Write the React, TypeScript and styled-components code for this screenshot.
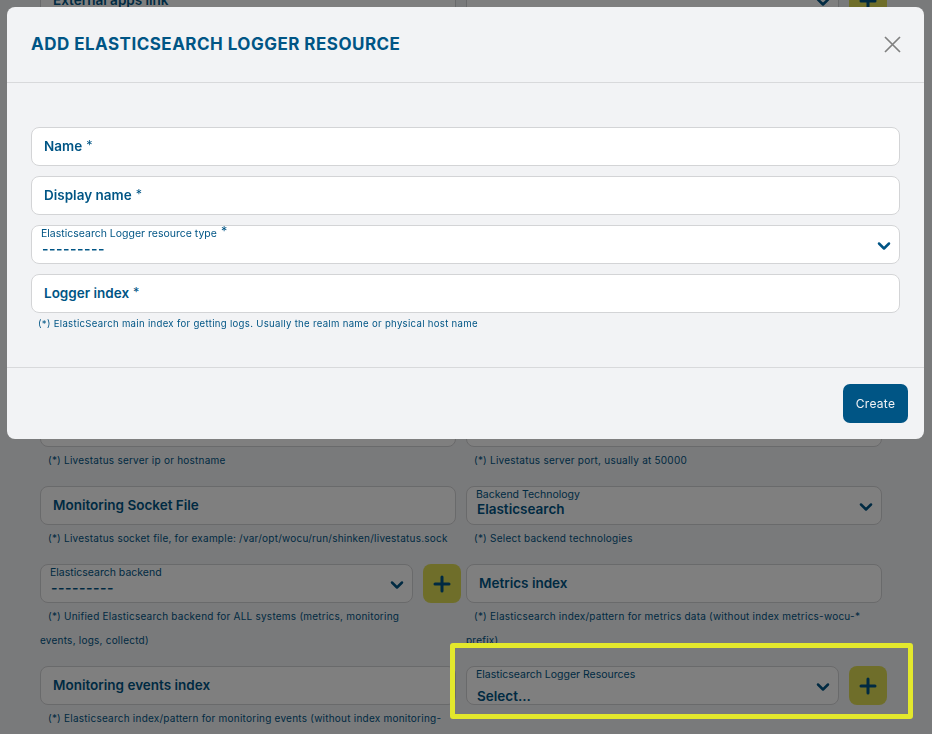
import * as React from "react";
import styled, { createGlobalStyle } from "styled-components";
import { ChevronDown, Plus } from "lucide-react";

const GlobalStyle = createGlobalStyle`
  html, body {
    margin: 0;
    height: 100%;
    overflow: hidden;
    background: #f3f4f6;
    font-family: "Inter", "Liberation Sans", sans-serif;
    color: #005585;
  }
`;

const Page = styled.div`
  height: 734px;
  overflow: hidden;
`;

const Form = styled.div`
  margin-top: -19px;
  padding-left: 40px;
`;

const Row = styled.div<{ $gap?: number }>`
  display: grid;
  grid-template-columns: 416px 416px;
  column-gap: 10px;
  margin-bottom: ${({ $gap }) => $gap ?? 14}px;
`;

const FieldRow = styled.div`
  display: flex;
  gap: 10px;
`;

const Field = styled.div<{ $narrow?: boolean }>`
  position: relative;
  box-sizing: border-box;
  width: ${({ $narrow }) => ($narrow ? "373px" : "100%")};
  height: 39px;
  flex: none;
  background: #fff;
  border: 1px solid #d3d4d6;
  border-radius: 8px;
  padding: 0 0 2px 12px;
  display: flex;
  align-items: center;
  font-size: 13.5px;
  font-weight: 600;
`;

const Star = styled.span`
  font-size: 12.5px;
  font-weight: 400;
  line-height: 0;
  margin-left: 4px;
  position: relative;
  top: -1px;
`;

const SelectBox = styled(Field)`
  display: block;
  padding: 1px 0 0 9px;
`;

const SelectLabel = styled.div`
  font-size: 10.5px;
  font-weight: 400;
  line-height: 14px;
  white-space: nowrap;
`;

const SelectValue = styled.div<{ $low?: boolean; $dashes?: boolean }>`
  font-size: ${({ $dashes }) => ($dashes ? "14px" : "13.5px")};
  font-weight: 600;
  line-height: 16px;
  margin-top: ${({ $low, $dashes }) => ($low ? "6px" : $dashes ? "0" : "-1px")};
  margin-left: 1px;
  letter-spacing: ${({ $dashes }) => ($dashes ? "0.5px" : "0")};
`;

const Chevron = styled(ChevronDown)`
  position: absolute;
  right: 5px;
  top: 10px;
`;

const AddButton = styled.div`
  flex: none;
  width: 38px;
  height: 39px;
  border-radius: 8px;
  background: #dedc54;
  display: flex;
  align-items: center;
  justify-content: center;
`;

const Help = styled.div`
  padding-top: 1px;
  font-size: 10px;
  line-height: 24px;
  letter-spacing: 0.23px;
  text-indent: 8px;
`;

const Overlay = styled.div`
  position: fixed;
  inset: 0;
  background: rgba(0, 0, 0, 0.5);
  padding: 7px 8px 0 7px;
`;

const Modal = styled.div`
  background: #f2f3f5;
  border-radius: 8px;
  height: 432px;
  display: flex;
  flex-direction: column;
`;

const ModalHeader = styled.div`
  height: 76px;
  flex: none;
  box-sizing: border-box;
  border-bottom: 1px solid #d8d9db;
  padding: 0 23px 1px 24px;
  display: flex;
  align-items: center;
  justify-content: space-between;
`;

const Title = styled.h1`
  margin: 0;
  font-size: 17px;
  font-weight: 700;
  letter-spacing: 0.48px;
  text-transform: uppercase;
`;

const CloseIcon = styled.svg`
  width: 17px;
  height: 17px;
  stroke: #808080;
  stroke-width: 1.7;
  fill: none;
`;

const ModalBody = styled.div`
  flex: 1;
  padding: 44px 24px 0;
  display: flex;
  flex-direction: column;
  gap: 10px;
`;

const ModalHelp = styled.div`
  margin-top: -6px;
  padding-left: 7px;
  font-size: 9.6px;
  line-height: 14px;
  letter-spacing: 0.3px;
`;

const ModalFooter = styled.div`
  height: 72px;
  flex: none;
  box-sizing: border-box;
  border-top: 1px solid #d8d9db;
  padding: 16px 16px 0 0;
  display: flex;
  justify-content: flex-end;
`;

const CreateButton = styled.button`
  width: 65px;
  height: 39px;
  border: 0;
  border-radius: 7px;
  background: #005585;
  color: #f2f3f5;
  font-family: inherit;
  font-size: 12px;
  font-weight: 400;
  letter-spacing: 0.3px;
`;

const Highlight = styled.div`
  position: fixed;
  left: 450px;
  top: 643px;
  width: 463px;
  height: 76px;
  box-sizing: border-box;
  border: 5px solid #e3e82c;
  border-radius: 3px;
`;

const Select: React.FC<{
  label: React.ReactNode;
  value: string;
  narrow?: boolean;
  low?: boolean;
}> = ({ label, value, narrow, low }) => (
  <SelectBox $narrow={narrow}>
    <SelectLabel>{label}</SelectLabel>
    <SelectValue $low={low} $dashes={value.startsWith("-")}>
      {value}
    </SelectValue>
    <Chevron size={20} strokeWidth={3} color="#005585" />
  </SelectBox>
);

const Add = () => (
  <AddButton>
    <Plus size={24} strokeWidth={3} color="#005585" />
  </AddButton>
);

export default function App() {
  return (
    <>
      <GlobalStyle />
      <Page>
        <Form>
          <Row $gap={388}>
            <Field>External apps link</Field>
            <FieldRow>
              <Select narrow label="" value="---------" />
              <Add />
            </FieldRow>
          </Row>
          <Row>
            <div>
              <Field />
              <Help>(*) Livestatus server ip or hostname</Help>
            </div>
            <div>
              <Field />
              <Help>(*) Livestatus server port, usually at 50000</Help>
            </div>
          </Row>
          <Row>
            <div>
              <Field>Monitoring Socket File</Field>
              <Help>
                (*) Livestatus socket file, for example:
                /var/opt/wocu/run/shinken/livestatus.sock
              </Help>
            </div>
            <div>
              <Select label="Backend Technology" value="Elasticsearch" />
              <Help>(*) Select backend technologies</Help>
            </div>
          </Row>
          <Row>
            <div>
              <FieldRow>
                <Select narrow label="Elasticsearch backend" value="---------" />
                <Add />
              </FieldRow>
              <Help>
                (*) Unified Elasticsearch backend for ALL systems (metrics,
                monitoring
                <br />
                events, logs, collectd)
              </Help>
            </div>
            <div>
              <Field>Metrics index</Field>
              <Help>
                (*) Elasticsearch index/pattern for metrics data (without index
                metrics-wocu-*
                <br />
                prefix)
              </Help>
            </div>
          </Row>
          <Row>
            <div>
              <Field>Monitoring events index</Field>
              <Help>
                (*) Elasticsearch index/pattern for monitoring events (without
                index monitoring-
              </Help>
            </div>
            <FieldRow>
              <Select
                narrow
                low
                label="Elasticsearch Logger Resources"
                value="Select..."
              />
              <Add />
            </FieldRow>
          </Row>
        </Form>
      </Page>
      <Overlay>
        <Modal>
          <ModalHeader>
            <Title>Add Elasticsearch Logger Resource</Title>
            <CloseIcon viewBox="0 0 17 17">
              <path d="M1 1l15 15M16 1L1 16" />
            </CloseIcon>
          </ModalHeader>
          <ModalBody>
            <Field>
              <span>
                Name<Star>*</Star>
              </span>
            </Field>
            <Field>
              <span>
                Display name<Star>*</Star>
              </span>
            </Field>
            <Select
              label={
                <>
                  Elasticsearch Logger resource type<Star>*</Star>
                </>
              }
              value="---------"
            />
            <Field>
              <span>
                Logger index<Star>*</Star>
              </span>
            </Field>
            <ModalHelp>
              (*) ElasticSearch main index for getting logs. Usually the realm
              name or physical host name
            </ModalHelp>
          </ModalBody>
          <ModalFooter>
            <CreateButton>Create</CreateButton>
          </ModalFooter>
        </Modal>
      </Overlay>
      <Highlight />
    </>
  );
}
